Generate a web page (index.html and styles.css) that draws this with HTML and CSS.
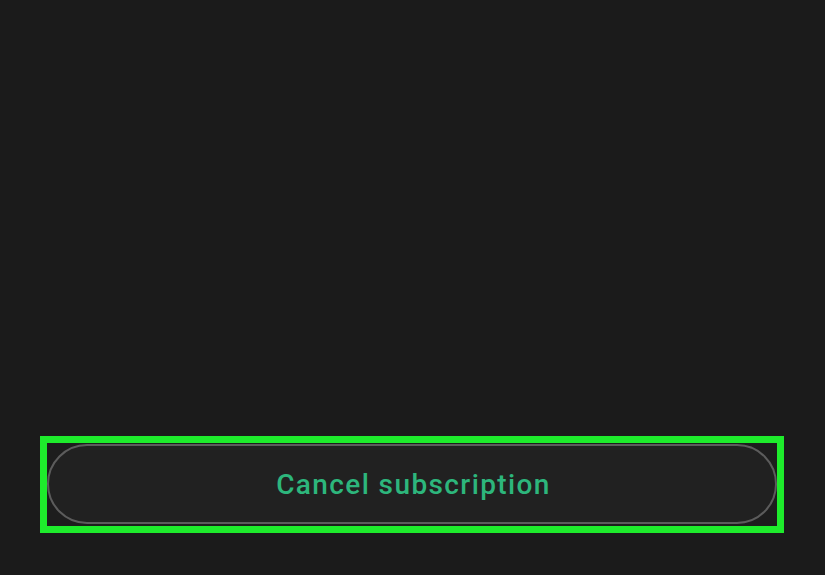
FILE: index.html
```html
<!DOCTYPE html>
<html lang="en">
<head>
  <meta charset="UTF-8" />
  <title>Subscription</title>
  <meta name="viewport" content="width=device-width, initial-scale=1.0" />
  <link rel="stylesheet" href="styles.css">
</head>
<body>

<div class="screen">
  <!-- Cancel button (highlighted) -->
  <div class="highlight">
    <button class="cancel-btn" type="button">Cancel subscription</button>
  </div>
</div>

</body>
</html>
```

FILE: styles.css
```css
body { background:#1b1b1b; margin:0; font-family:Roboto, "Noto Sans", sans-serif; }
.screen { min-height:100vh; display:flex; flex-direction:column; justify-content:flex-end; box-sizing:border-box; padding:0 41px 42px 40px; }

.highlight { border:7px solid #1eec2c; padding:1px 0 2px 0; background:#1d1d1d; }
.cancel-btn {
  display:block;
  width:100%;
  height:80px;
  padding:0 0 0 3px;
  border:2px solid #5c5c5c;
  border-radius:40px;
  background:#212121;
  color:#2db67c;
  font-family:Roboto, "Noto Sans", sans-serif;
  font-size:28px;
  font-weight:500;
  letter-spacing:1.4px;
  cursor:pointer;
}
```
